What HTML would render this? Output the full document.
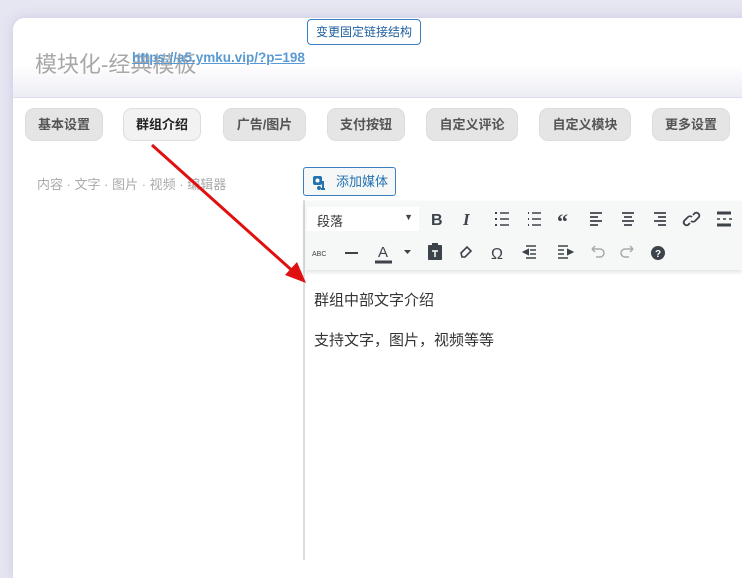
<!DOCTYPE html>
<html><head><meta charset="utf-8"><style>
*{margin:0;padding:0;box-sizing:border-box}
body{width:742px;height:555px;overflow:hidden;background:#e6e6f2;font-family:"Liberation Sans","Noto Sans CJK SC",sans-serif;position:relative}
.card{position:absolute;left:13px;top:18px;width:740px;height:560px;background:#fff;border-radius:12px 0 0 0;box-shadow:0 0 12px rgba(150,150,200,.35)}
.head{position:absolute;left:13px;top:18px;width:729px;height:80px;border-radius:12px 0 0 0;background:linear-gradient(#fff 60%,#ececf6);border-bottom:1px solid #ddddee}
.title{position:absolute;left:35px;top:47px;font-size:22px;color:#a8a8a8}
.link{position:absolute;left:132px;top:50px;font-size:13.5px;font-weight:bold;color:#5a9ad2;text-decoration:underline}
.chg{position:absolute;left:307px;top:19px;width:114px;height:26px;border:1px solid #3a7fc1;border-radius:4px;background:#fff;color:#1f5f9e;font-size:12px;text-align:center;line-height:24px}
.tab{position:absolute;top:108px;height:33px;border-radius:9px;background:#e5e5e5;border:1px solid #ddd;color:#555;font-size:13px;font-weight:bold;text-align:center;line-height:31px}
.tab.on{background:#f2f2f2;color:#222}
.sub{position:absolute;left:37px;top:174px;font-size:13px;color:#aaa}
.media{position:absolute;left:303px;top:167px;width:93px;height:29px;border:1px solid #3a7fc1;border-radius:3px;background:#f6f7f7;color:#2271b1;font-size:13px;line-height:27px;padding-left:32px}
.ed{position:absolute;left:303px;top:200px;width:450px;height:360px;border-left:2px solid #ddd}
.tb{position:absolute;left:305px;top:201px;width:437px;height:69px;background:#f6f7f7;box-shadow:0 2px 4px rgba(0,0,0,.12)}
.sel{position:absolute;left:307px;top:207px;width:112px;height:24px;background:#fff;font-size:13px;color:#333;padding:4px 0 0 10px}
.sel b{position:absolute;right:6px;top:5px;font-size:9px;color:#444}
.txt{position:absolute;left:314px;font-size:15px;color:#333}
svg.ic{position:absolute;left:0;top:0}
</style></head><body>
<div class="card"></div><div class="head"></div>
<div class="title">模块化-经典模板</div>
<div class="link">https://a5.ymku.vip/?p=198</div>
<div class="chg">变更固定链接结构</div>
<div class="tab" style="left:25px;width:78px">基本设置</div>
<div class="tab on" style="left:123px;width:78px">群组介绍</div>
<div class="tab" style="left:223px;width:83px">广告/图片</div>
<div class="tab" style="left:327px;width:78px">支付按钮</div>
<div class="tab" style="left:426px;width:92px">自定义评论</div>
<div class="tab" style="left:539px;width:92px">自定义模块</div>
<div class="tab" style="left:652px;width:78px">更多设置</div>
<div class="sub">内容 · 文字 · 图片 · 视频 · 编辑器</div>
<div class="media">添加媒体</div>
<div class="ed"></div>
<div class="tb"></div>
<div class="sel">段落<b>▼</b></div>
<svg class="ic" width="742" height="555" fill="none" stroke="#3c434a" stroke-width="2">
<!-- media icon -->
<rect x="313" y="176" width="9" height="9" rx="2" fill="#2271b1" stroke="none"/><circle cx="317.5" cy="180.5" r="2" fill="#fff" stroke="none"/><path d="M323 181v8M321 189h4" stroke="#2271b1"/><circle cx="319" cy="188" r="2" fill="#2271b1" stroke="none"/>
<text x="431" y="225" font-size="16" font-weight="bold" fill="#3c434a" stroke="none" font-family="Liberation Sans">B</text>
<text x="463" y="225" font-size="17" font-style="italic" font-weight="bold" fill="#3c434a" stroke="none" font-family="Liberation Serif">I</text>
<path d="M500 213h9M500 219h9M500 225h9" stroke-width="1.5"/><path d="M495 213h2M495 219h2M495 225h2" stroke-width="2"/>
<path d="M532 213h9M532 219h9M532 225h9" stroke-width="1.5"/><path d="M528 213h1M528 219h1M528 225h1" stroke-width="2"/>
<text x="557" y="229" font-size="22" font-weight="bold" fill="#3c434a" stroke="none" font-family="Liberation Serif">“</text>
<path d="M590 213h12M590 217h8M590 221h12M590 225h8" stroke-width="1.8"/>
<path d="M622 213h12M624 217h8M622 221h12M624 225h8" stroke-width="1.8"/>
<path d="M654 213h12M658 217h8M654 221h12M658 225h8" stroke-width="1.8"/>
<path d="M690 223l-2 2a3 3 0 0 1-4-4l4-4a3 3 0 0 1 4 0M693 215l2-2a3 3 0 0 1 4 4l-4 4a3 3 0 0 1-4 0" stroke-width="1.8"/>
<path d="M717 213h14M717 225h14" stroke-width="3"/><path d="M717 219h3M723 219h3M729 219h3" stroke-width="1.5"/>
<text x="312" y="256" font-size="7" fill="#3c434a" stroke="none" font-family="Liberation Sans">ABC</text>
<path d="M345 253h13"/>
<text x="378" y="257" font-size="15" fill="#3c434a" stroke="none" font-family="Liberation Sans">A</text><path d="M375 262h17" stroke-width="3"/>
<path d="M404 250h7l-3.5 4z" fill="#3c434a" stroke="none"/>
<rect x="428" y="245" width="14" height="15" rx="1" fill="#3c434a" stroke="none"/><rect x="432" y="243" width="6" height="4" fill="#3c434a" stroke="none"/><path d="M432 251h6M435 251v6" stroke="#fff" stroke-width="1.5"/>
<path d="M461 253l6-6 4 4-6 6h-3z" stroke-width="1.6"/>
<text x="491" y="259" font-size="16" fill="#3c434a" stroke="none" font-family="Liberation Sans">Ω</text>
<path d="M526 246h10M530 250h6M530 254h6M526 258h10" stroke-width="1.5"/><path d="M524 252l4-2v4z" fill="#3c434a"/>
<path d="M558 246h10M558 250h6M558 254h6M558 258h10" stroke-width="1.5"/><path d="M572 252l-4-2v4z" fill="#3c434a"/>
<path d="M592 249h8a4 4 0 0 1 0 8h-4M592 249l3-3M592 249l3 3" stroke="#aaa" stroke-width="1.5"/>
<path d="M633 249h-8a4 4 0 0 0 0 8h4M633 249l-3-3M633 249l-3 3" stroke="#aaa" stroke-width="1.5"/>
<circle cx="658" cy="253" r="7" fill="#3c434a" stroke="none"/>
<text x="655" y="257" font-size="10" font-weight="bold" fill="#fff" stroke="none" font-family="Liberation Sans">?</text>
</svg>
<div class="txt" style="top:289px">群组中部文字介绍</div>
<div class="txt" style="top:329px">支持文字，图片，视频等等</div>
<svg style="position:absolute;left:0;top:0" width="742" height="555"><line x1="152" y1="145" x2="296" y2="274" stroke="#e01010" stroke-width="3"/><polygon points="306,283 285,275 297,262" fill="#e01010"/></svg>
</body></html>
